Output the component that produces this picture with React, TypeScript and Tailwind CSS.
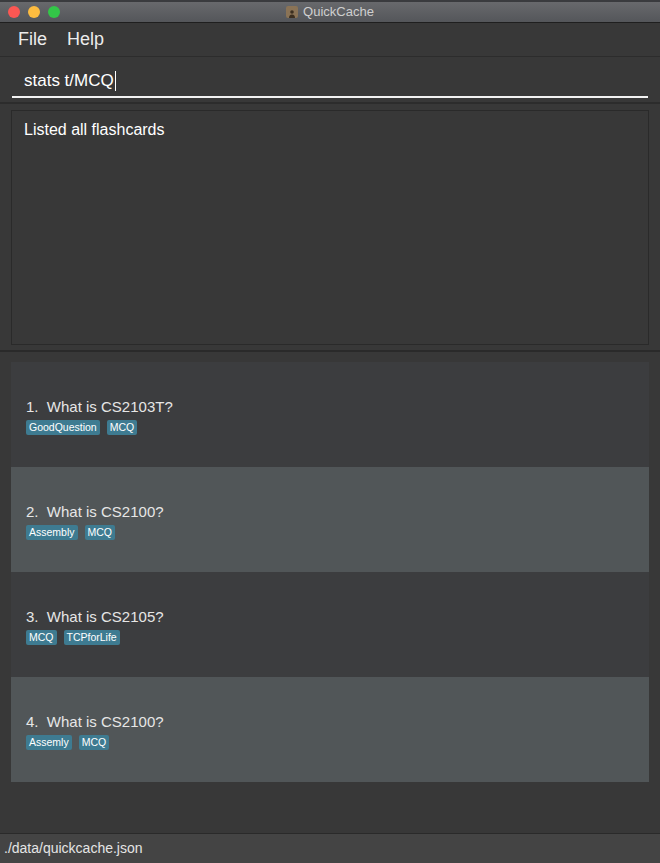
import React from "react";

const cards = [
  { n: 1, q: "What is CS2103T?", tags: ["GoodQuestion", "MCQ"] },
  { n: 2, q: "What is CS2100?", tags: ["Assembly", "MCQ"] },
  { n: 3, q: "What is CS2105?", tags: ["MCQ", "TCPforLife"] },
  { n: 4, q: "What is CS2100?", tags: ["Assemly", "MCQ"] },
];

export default function App() {
  return (
    <div
      className="w-[660px] h-[863px] flex flex-col bg-[#383838] overflow-hidden"
      style={{ fontFamily: '"Liberation Sans", Arial, sans-serif' }}
    >
      {/* Title bar */}
      <div className="relative h-[23px] shrink-0 bg-gradient-to-b from-[#6a6b6e] to-[#54565a] border-b border-[#1f1f1f] flex items-center">
        <div className="absolute left-0 right-0 top-0 h-[2px] bg-[#3a3b3e]" />
        <div className="flex gap-[8px] pl-[8px] pt-[2px]">
          <span className="w-[12px] h-[12px] rounded-full bg-[#fc5753]" />
          <span className="w-[12px] h-[12px] rounded-full bg-[#fdbc40]" />
          <span className="w-[12px] h-[12px] rounded-full bg-[#33c748]" />
        </div>
        <div className="absolute inset-0 flex items-center justify-center gap-[5px] pt-[2px]">
          <span className="w-[12px] h-[12px] rounded-[2px] bg-[#8a7356] flex items-end justify-center">
            <svg width="8" height="9" viewBox="0 0 8 9">
              <circle cx="4" cy="3" r="1.8" fill="#3c2f20" />
              <path d="M1 9 Q1 5.5 4 5.5 Q7 5.5 7 9Z" fill="#3c2f20" />
            </svg>
          </span>
          <span className="text-[13px] text-[#cfcfcf]">QuickCache</span>
        </div>
      </div>

      {/* Menu bar */}
      <div className="h-[34px] shrink-0 flex items-center gap-[20px] pl-[18px] text-[18px] text-[#ececec] border-b border-[#2c2c2c]">
        <span>File</span>
        <span>Help</span>
      </div>

      {/* Command box */}
      <div className="h-[47px] shrink-0 px-[12px] pt-[11px] border-b-2 border-[#2c2c2c]">
        <div className="h-[30px] border-b-2 border-[#f2f2f2] flex items-center pl-[12px] pb-[2px] text-[17px] text-white">
          stats t/MCQ
          <span className="inline-block w-[1px] h-[20px] bg-white ml-[1px]" />
        </div>
      </div>

      {/* Result display */}
      <div className="h-[248px] shrink-0 px-[11px] pt-[6px] pb-[5px] border-b-2 border-[#2a2a2a]">
        <div className="h-full border border-[#2a2a2a] pl-[12px] pt-[7px] text-[16px] text-white">
          Listed all flashcards
        </div>
      </div>

      {/* List */}
      <div className="flex-1 px-[11px] pt-[10px]">
        {cards.map((c, i) => (
          <div
            key={c.n}
            className={`h-[105px] flex flex-col justify-center pl-[15px] pt-[2px] ${
              i % 2 === 0 ? "bg-[#3c3d3f]" : "bg-[#515658]"
            }`}
          >
            <div className="text-[15px] text-[#e6e6e6] leading-[20px]">
              {c.n}.&nbsp;&nbsp;{c.q}
            </div>
            <div className="flex gap-[7px] mt-[3px]">
              {c.tags.map((t) => (
                <span
                  key={t}
                  className="bg-[#3e7b91] text-white text-[10.5px] leading-[15px] px-[3px] rounded-[2px]"
                >
                  {t}
                </span>
              ))}
            </div>
          </div>
        ))}
      </div>

      {/* Status bar */}
      <div className="h-[30px] shrink-0 bg-[#444444] border-t border-[#2a2a2a] flex items-center pl-[4px] text-[14px] text-[#e4e4e4]">
        ./data/quickcache.json
      </div>
    </div>
  );
}
